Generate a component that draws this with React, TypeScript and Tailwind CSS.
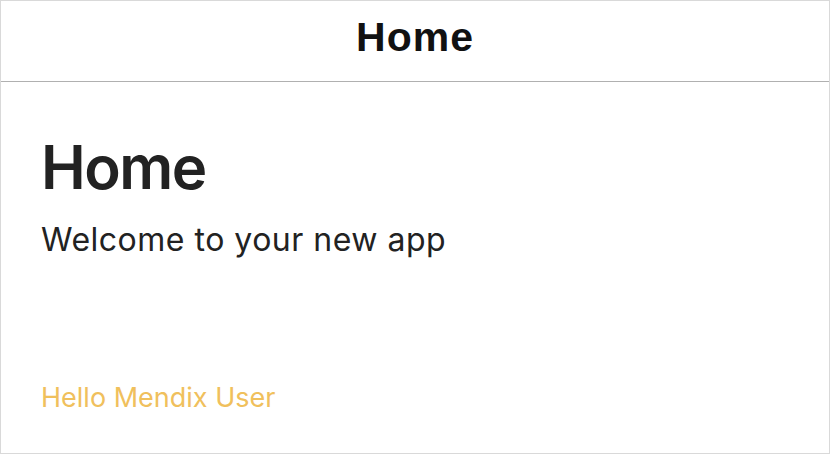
import React from "react";

export default function App() {
  return (
    <div className="w-[830px] h-[454px] bg-white border border-[#d9d9d9] flex flex-col overflow-hidden">
      <div className="h-[81px] shrink-0 flex items-center justify-center border-b border-[#b0b0b0]">
        <span className="mb-[8px] text-[41px] font-bold text-[#111] leading-none tracking-[1px]" style={{ fontFamily: '"Liberation Sans", Arial, sans-serif' }}>
          Home
        </span>
      </div>
      <div className="flex flex-col px-[40px]" style={{ fontFamily: 'Inter, "Noto Sans", sans-serif' }}>
        <h1 className="mt-[50px] text-[60px] font-semibold text-[#222] leading-[70px] tracking-[-1.5px]">Home</h1>
        <p className="mt-[18px] text-[32px] text-[#222] leading-[40px] tracking-[0.5px]">Welcome to your new app</p>
        <p className="mt-[121px] text-[27px] text-[#f0c05c] leading-[34px]">Hello Mendix User</p>
      </div>
    </div>
  );
}
